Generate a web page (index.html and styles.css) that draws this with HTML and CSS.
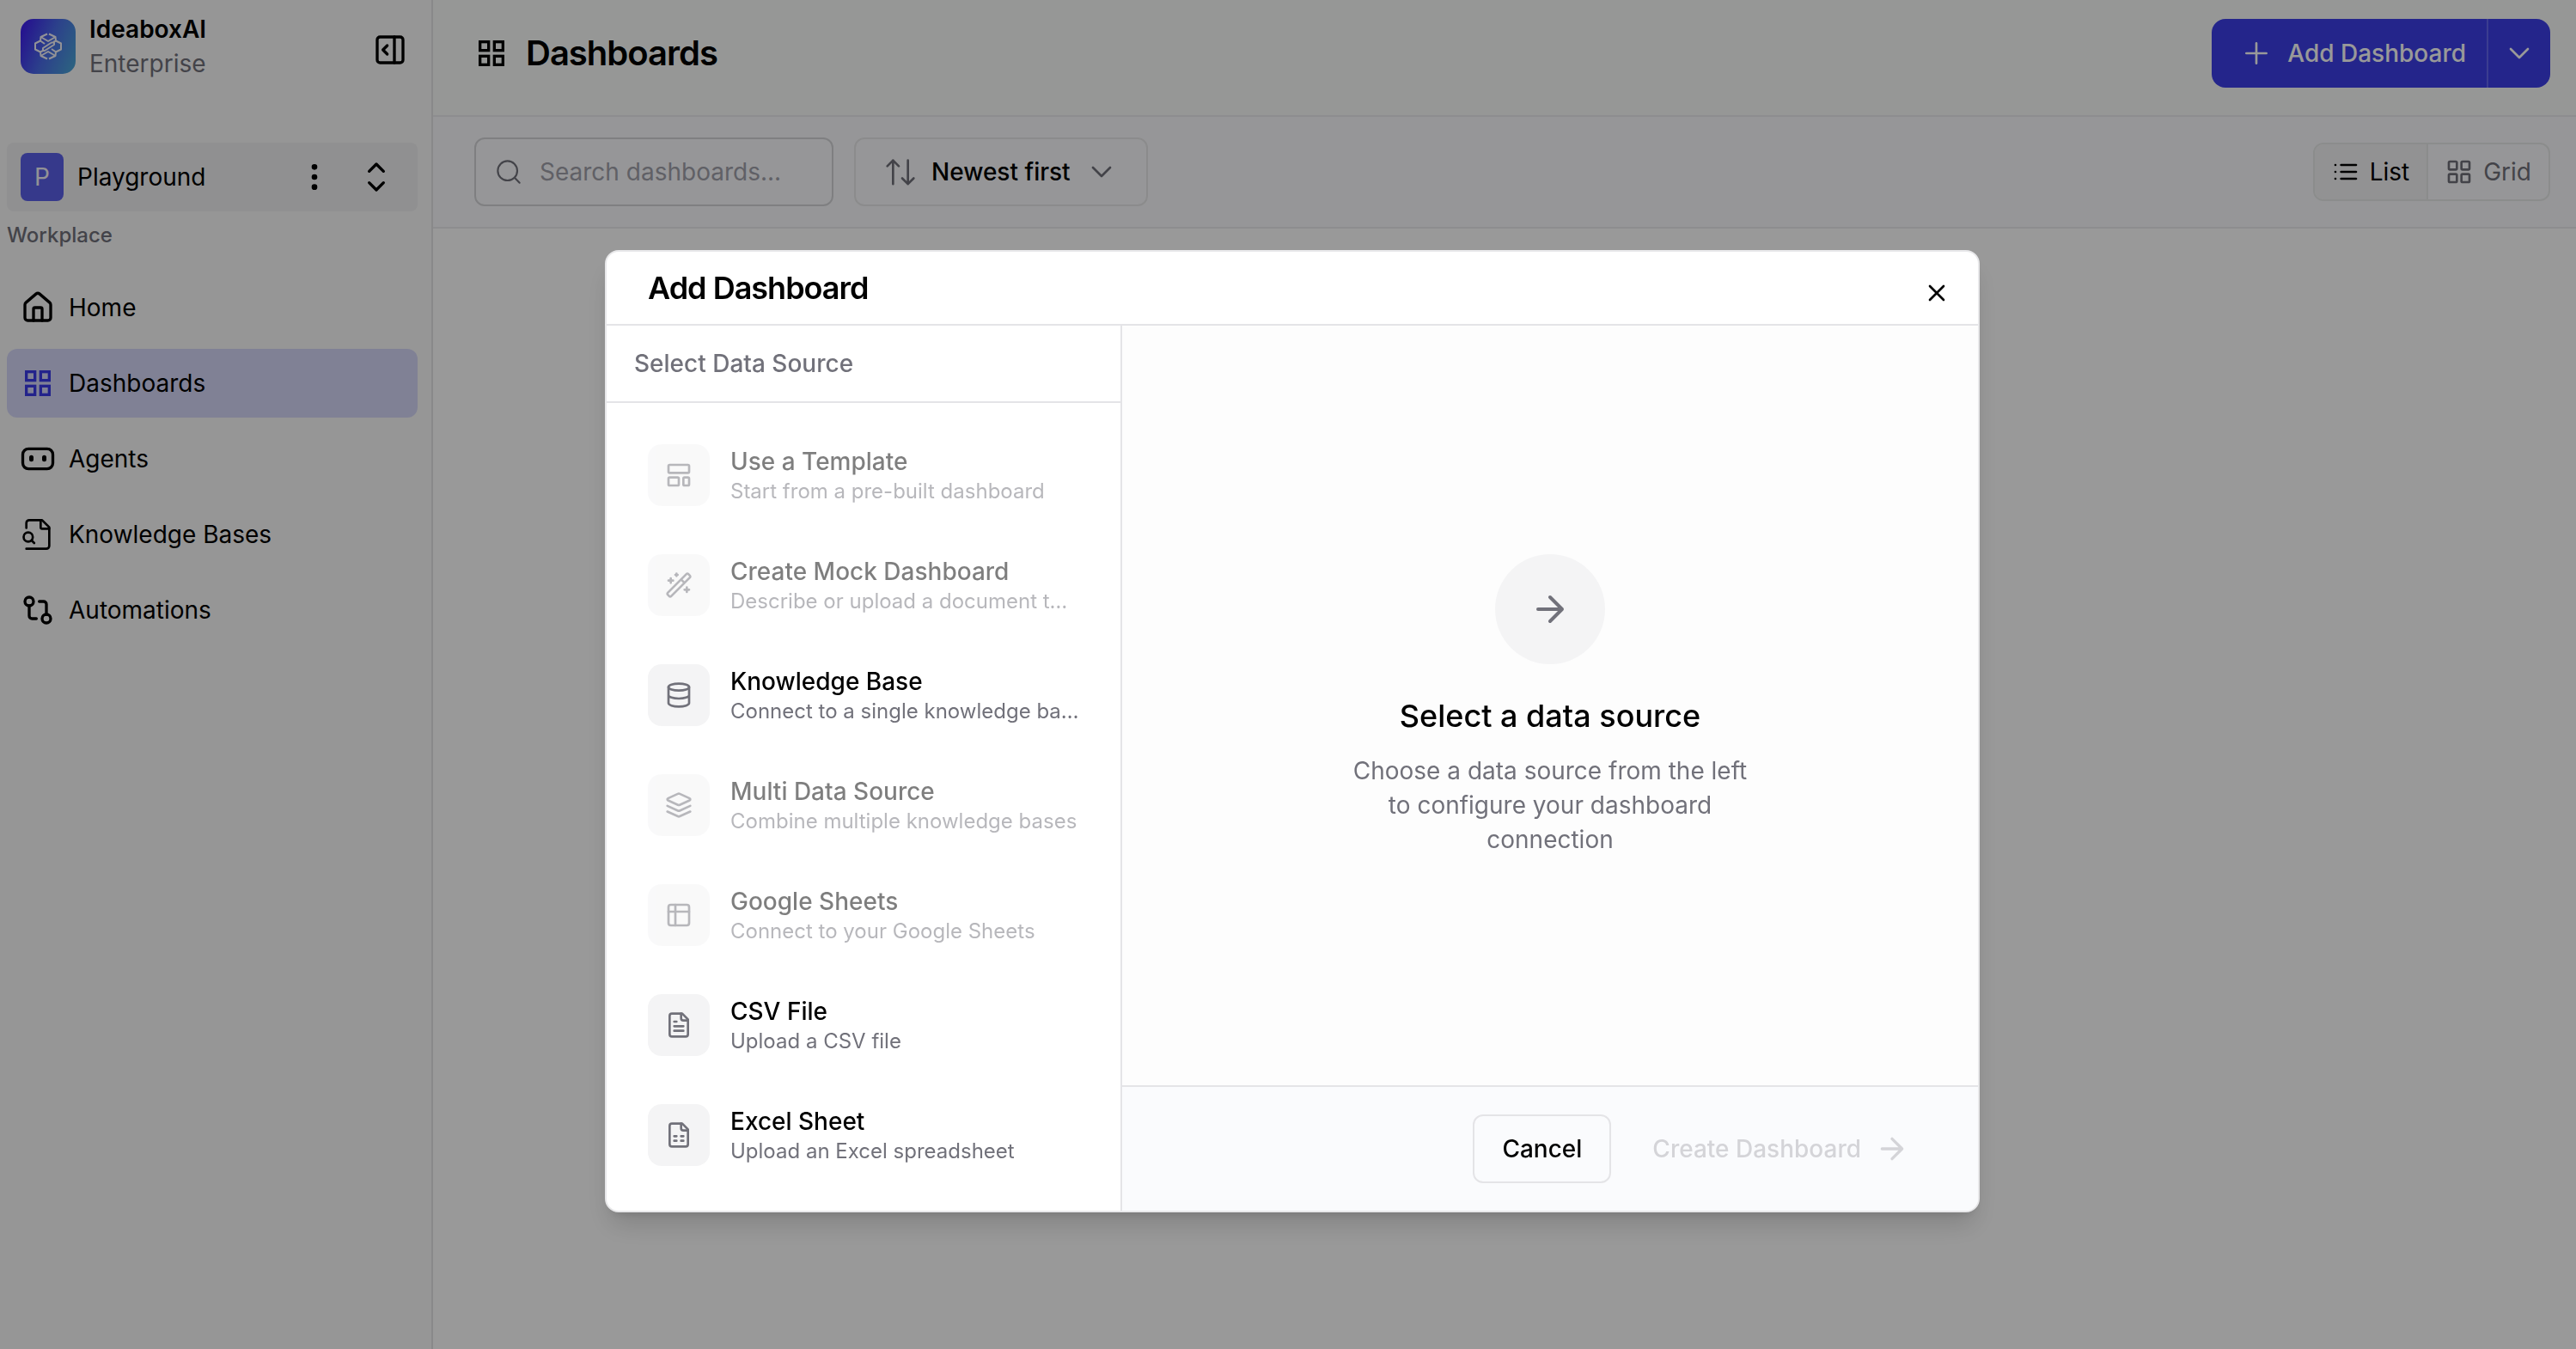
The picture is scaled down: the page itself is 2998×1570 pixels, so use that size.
FILE: index.html
```html
<!DOCTYPE html>
<html lang="en">
<head>
<meta charset="utf-8">
<title>Dashboards</title>
<link rel="stylesheet" href="styles.css">
</head>
<body>
<svg class="sprite" aria-hidden="true">
  <symbol id="i-grid" viewBox="0 0 24 24"><rect x="4" y="4" width="6" height="6"/><rect x="14" y="4" width="6" height="6"/><rect x="4" y="14" width="6" height="6"/><rect x="14" y="14" width="6" height="6"/></symbol>
  <symbol id="i-chevron" viewBox="0 0 24 24"><path d="m6 9 6 6 6-6"/></symbol>
  <symbol id="i-arrow" viewBox="0 0 24 24"><path d="M5 12h14M12 5l7 7-7 7"/></symbol>
</svg>
<div class="app">
  <aside class="sidebar">
    <div class="brand">
      <svg class="logo" viewBox="0 0 64 64" aria-hidden="true">
        <defs><linearGradient id="lg" x1="0" y1="0.3" x2="1" y2="0.7"><stop offset="0" stop-color="#3f22ee"/><stop offset=".5" stop-color="#4a6ce8"/><stop offset="1" stop-color="#4aa0d8"/></linearGradient></defs>
        <rect width="64" height="64" rx="15" fill="url(#lg)"/>
        <g fill="none" stroke="#f4f4fa" stroke-width="2" stroke-linejoin="round">
          <path d="M31 17.500l-7.500 3.500-.5 4.500-6 3v7l6 3 .5 4.500 7.500 3.500M33 17.500l7.500 3.500.5 4.500 6 3v7l-6 3-.5 4.500-7.500 3.500"/>
          <path d="M23.500 21l8.500 5 8.500-5M23.500 43l8.500-5 8.500 5M23 25.500l5 3.500M41 38.500l-5-3.500M41 25.500l-3 1.500M23 38.500l3-1.500"/>
          <path d="M26 37v-3l10-6.500h3v2.500L28 37z"/>
        </g>
      </svg>
      <div class="brand-text"><strong>IdeaboxAI</strong><span>Enterprise</span></div>
      <button class="icon-btn collapse" aria-label="Collapse sidebar"><svg class="icon i40" viewBox="0 0 24 24"><rect x="3" y="3" width="18" height="18" rx="2"/><path d="M15 3v18M10 9l-3 3 3 3"/></svg></button>
    </div>
    <div class="workspace">
      <span class="avatar">P</span>
      <span class="workspace-name">Playground</span>
      <div class="workspace-actions">
        <button class="icon-btn" aria-label="More"><svg class="icon i40 dots" viewBox="0 0 24 24"><circle cx="12" cy="5" r="1"/><circle cx="12" cy="12" r="1"/><circle cx="12" cy="19" r="1"/></svg></button>
        <button class="icon-btn" aria-label="Switch workspace"><svg class="icon i40" viewBox="0 0 24 24"><path d="m7 16 5 5 5-5M7 8l5-5 5 5"/></svg></button>
      </div>
    </div>
    <p class="section-label">Workplace</p>
    <nav class="nav">
      <a href="#"><svg class="icon i40" viewBox="0 0 24 24"><path d="M15 21v-8a1 1 0 0 0-1-1h-4a1 1 0 0 0-1 1v8"/><path d="M3 10a2 2 0 0 1 .709-1.528l7-5.999a2 2 0 0 1 2.582 0l7 5.999A2 2 0 0 1 21 10v9a2 2 0 0 1-2 2H5a2 2 0 0 1-2-2z"/></svg>Home</a>
      <a href="#" class="active"><svg class="icon i40 square"><use href="#i-grid"/></svg>Dashboards</a>
      <a href="#"><svg class="icon i40" viewBox="0 0 24 24"><rect x="1.500" y="5" width="21" height="14" rx="4"/><path d="M7.500 11v1.500M16.500 11v1.500" stroke-width="3"/></svg>Agents</a>
      <a href="#"><svg class="icon i40 thin" viewBox="0 0 24 24"><path d="M14 2v5a1 1 0 0 0 1 1h5"/><path d="M4 7.500V4a2 2 0 0 1 2-2h9l5 5v13a2 2 0 0 1-2 2H4"/><circle cx="5.300" cy="13.800" r="3.200"/><path d="m9.500 18-1.900-1.900"/></svg>Knowledge Bases</a>
      <a href="#"><svg class="icon i40" viewBox="0 0 24 24"><circle cx="18" cy="18" r="3"/><circle cx="6" cy="6" r="3"/><path d="M13 6h3a2 2 0 0 1 2 2v7M11 18H8a2 2 0 0 1-2-2V9"/></svg>Automations</a>
    </nav>
  </aside>
  <main class="main">
    <header class="page-head">
      <svg class="icon i40 square"><use href="#i-grid"/></svg>
      <h1>Dashboards</h1>
      <div class="split">
        <button class="split-main"><svg class="icon i40 light" viewBox="0 0 24 24"><path d="M5 12h14M12 5v14"/></svg>Add Dashboard</button>
        <button class="split-more" aria-label="More options"><svg class="icon i40 light"><use href="#i-chevron"/></svg></button>
      </div>
    </header>
    <div class="toolbar">
      <label class="search"><svg class="icon i32 light" viewBox="0 0 24 24"><circle cx="11" cy="11" r="8.500"/><path d="m17.500 17.500 4 4"/></svg><input type="text" placeholder="Search dashboards..." aria-label="Search dashboards"></label>
      <button class="sort"><svg class="icon i40 light" viewBox="0 0 24 24"><path d="M2.800 8l4-4 4 4M6.800 4v16.500M21.200 16.500l-4 4-4-4M17.200 20.500V4"/></svg>Newest first<svg class="icon i40 light"><use href="#i-chevron"/></svg></button>
      <div class="views">
        <button class="on"><svg class="icon i32" viewBox="0 0 24 24"><path d="M8 6h13M8 12h13M8 18h13M3 6h.01M3 12h.01M3 18h.01"/></svg>List</button>
        <button><svg class="icon i32" viewBox="0 0 24 24"><rect x="3" y="3" width="7" height="7" rx="1"/><rect x="14" y="3" width="7" height="7" rx="1"/><rect x="3" y="14" width="7" height="7" rx="1"/><rect x="14" y="14" width="7" height="7" rx="1"/></svg>Grid</button>
      </div>
    </div>
  </main>
</div>
<div class="overlay">
  <section class="modal" role="dialog" aria-modal="true" aria-labelledby="dlg-title">
    <header class="modal-head">
      <h2 id="dlg-title">Add Dashboard</h2>
      <button class="icon-btn close" aria-label="Close"><svg class="icon i32" viewBox="0 0 24 24"><path d="M18 6 6 18M6 6l12 12"/></svg></button>
    </header>
    <div class="modal-body">
      <div class="sources">
        <h3>Select Data Source</h3>
        <div class="source-list">
          <button class="source" disabled><span class="tile"><svg class="icon i32" viewBox="0 0 24 24"><rect x="3" y="3" width="18" height="7" rx="1"/><rect x="3" y="14" width="9" height="7" rx="1"/><rect x="16" y="14" width="5" height="7" rx="1"/></svg></span><span class="source-text"><b>Use a Template</b><small>Start from a pre-built dashboard</small></span></button>
          <button class="source" disabled><span class="tile"><svg class="icon i32" viewBox="0 0 24 24"><path d="m21.640 3.640-1.280-1.280a1.210 1.210 0 0 0-1.720 0L2.360 18.640a1.210 1.210 0 0 0 0 1.720l1.280 1.280a1.200 1.200 0 0 0 1.720 0L21.640 5.360a1.200 1.200 0 0 0 0-1.720M14 7l3 3M5 6v4M19 14v4M10 2v2M7 8H3M21 16h-4M11 3H9"/></svg></span><span class="source-text"><b>Create Mock Dashboard</b><small>Describe or upload a document to generate one</small></span></button>
          <button class="source"><span class="tile"><svg class="icon i32" viewBox="0 0 24 24"><ellipse cx="12" cy="5" rx="9" ry="3"/><path d="M3 5v14a9 3 0 0 0 18 0V5M3 12a9 3 0 0 0 18 0"/></svg></span><span class="source-text"><b>Knowledge Base</b><small>Connect to a single knowledge base</small></span></button>
          <button class="source" disabled><span class="tile"><svg class="icon i32" viewBox="0 0 24 24"><path d="m12.830 2.180a2 2 0 0 0-1.660 0L2.600 6.080a1 1 0 0 0 0 1.830l8.580 3.910a2 2 0 0 0 1.660 0l8.580-3.900a1 1 0 0 0 0-1.830z"/><path d="m22 17.650-9.170 4.160a2 2 0 0 1-1.660 0L2 17.650M22 12.650l-9.170 4.160a2 2 0 0 1-1.660 0L2 12.650"/></svg></span><span class="source-text"><b>Multi Data Source</b><small>Combine multiple knowledge bases</small></span></button>
          <button class="source" disabled><span class="tile"><svg class="icon i32" viewBox="0 0 24 24"><rect x="3" y="3" width="18" height="18" rx="2"/><path d="M3 9h18M9 3v18"/></svg></span><span class="source-text"><b>Google Sheets</b><small>Connect to your Google Sheets</small></span></button>
          <button class="source"><span class="tile"><svg class="icon i32" viewBox="0 0 24 24"><path d="M15 2H6a2 2 0 0 0-2 2v16a2 2 0 0 0 2 2h12a2 2 0 0 0 2-2V7Z"/><path d="M14 2v4a2 2 0 0 0 2 2h4M10 9H8M16 13H8M16 17H8"/></svg></span><span class="source-text"><b>CSV File</b><small>Upload a CSV file</small></span></button>
          <button class="source"><span class="tile"><svg class="icon i32" viewBox="0 0 24 24"><path d="M15 2H6a2 2 0 0 0-2 2v16a2 2 0 0 0 2 2h12a2 2 0 0 0 2-2V7Z"/><path d="M14 2v4a2 2 0 0 0 2 2h4M8 13h2M14 13h2M8 17h2M14 17h2"/></svg></span><span class="source-text"><b>Excel Sheet</b><small>Upload an Excel spreadsheet</small></span></button>
        </div>
      </div>
      <div class="detail">
        <div class="empty">
          <span class="circle"><svg class="icon i48"><use href="#i-arrow"/></svg></span>
          <h3>Select a data source</h3>
          <p>Choose a data source from the left to configure your dashboard connection</p>
        </div>
        <footer class="modal-foot">
          <button class="cancel">Cancel</button>
          <button class="create" disabled>Create Dashboard<svg class="icon i40"><use href="#i-arrow"/></svg></button>
        </footer>
      </div>
    </div>
  </section>
</div>
</body>
</html>
```
FILE: styles.css
```css
* { box-sizing: border-box; }
body {
  margin: 0;
  font: 400 28px/40px Inter, "Liberation Sans", sans-serif;
  color: #000;
  background: #fff;
}
h1, h2, h3, p { margin: 0; }
button, input { font: inherit; color: inherit; margin: 0; }
button { display: flex; align-items: center; padding: 0; border: 0; background: none; text-align: left; }
a { color: inherit; text-decoration: none; }
.sprite { display: none; }

.icon { flex: none; fill: none; stroke: currentColor; stroke-width: 2; stroke-linecap: round; stroke-linejoin: round; }
.icon.square { stroke-linejoin: miter; }
.icon.light, .icon.thin { stroke-width: 1.6; }
.icon.dots { fill: currentColor; }
.i32 { width: 32px; height: 32px; }
.i40 { width: 40px; height: 40px; }
.i48 { width: 48px; height: 48px; }

.app { display: flex; min-height: 100vh; }
.sidebar { flex: none; width: 504px; padding: 8px 16px 0 8px; background: #fafafa; border-right: 2px solid #e4e4e7; }
.main { flex: 1; min-width: 0; }

.brand { display: flex; align-items: flex-start; padding: 6px 12px 0 16px; }
.logo { flex: none; width: 64px; height: 64px; margin-top: 8px; }
.brand-text { display: flex; flex-direction: column; flex: 1; margin-left: 16px; }
.brand-text strong { font-weight: 600; }
.brand-text span { color: #71717a; }
.collapse { margin-top: 24px; }

.workspace { display: flex; align-items: center; gap: 16px; height: 80px; margin-top: 72px; padding: 0 28px 0 16px; border-radius: 8px; background: #f0f0f2; }
.avatar { width: 50px; height: 56px; border-radius: 8px; background: #5b5fe8; color: #f4f4fa; line-height: 56px; text-align: center; }
.workspace-name { flex: 1; }
.workspace-actions { display: flex; gap: 32px; }

.section-label { margin: 8px 0 0; color: #71717a; font-size: 24px; font-weight: 500; }
.nav { display: flex; flex-direction: column; gap: 8px; margin-top: 24px; }
.nav a { display: flex; align-items: center; gap: 16px; height: 80px; padding: 0 16px; border-radius: 12px; }
.nav .active { background: #d6d8f9; }
.nav .active .icon { color: #3b3be8; }

.page-head { display: flex; align-items: center; gap: 20px; height: 136px; padding: 0 30px 10px 48px; background: #fafcfb; border-bottom: 2px solid #ececee; }
.page-head h1 { flex: 1; font-size: 40px; font-weight: 600; letter-spacing: -1px; }
.split { display: flex; height: 80px; border-radius: 16px; overflow: hidden; background: #3c3fe8; color: #fff; font-weight: 500; }
.split-main { gap: 16px; padding: 0 24px 0 32px; }
.split-more { justify-content: center; width: 74px; border-left: 2px solid #6366f1; }

.toolbar { display: flex; align-items: center; gap: 24px; height: 130px; padding: 0 30px 0 48px; background: #fafbfd; border-bottom: 2px solid #ececee; }
.search { display: flex; align-items: center; gap: 20px; width: 418px; height: 80px; padding: 0 22px; border: 2px solid #d4d4d8; border-radius: 12px; color: #71717a; }
.search input { flex: 1; min-width: 0; padding: 0; border: 0; outline: 0; background: none; }
.search input::placeholder { color: #a1a1aa; opacity: 1; }
.sort { gap: 16px; height: 80px; padding: 0 32px; border: 2px solid #e8e8ea; border-radius: 12px; font-weight: 500; }
.sort .icon { color: #71717a; }
.views { display: flex; height: 68px; margin-left: auto; border: 2px solid #e8eaea; border-radius: 12px; overflow: hidden; color: #71717a; }
.views button { gap: 12px; padding: 0 20px; }
.views .on { background: #f4f4f5; color: #000; border-right: 2px solid #e8eaea; }

.overlay { position: fixed; inset: 0; display: flex; justify-content: center; align-items: flex-start; padding: 291px 0 0 10px; background: rgba(0, 0, 0, .4); }
.modal { width: 1600px; border: 2px solid #e8e8ea; border-radius: 16px; overflow: hidden; background: #fff; box-shadow: 0 20px 30px -6px rgba(0, 0, 0, .15), 0 8px 12px -8px rgba(0, 0, 0, .15); }
.modal-head { display: flex; justify-content: space-between; align-items: center; height: 86px; padding: 0 32px 0 48px; border-bottom: 2px solid #e4e4e7; }
.modal-head h2 { font-size: 36px; font-weight: 600; letter-spacing: -1px; }
.close { align-self: flex-end; padding: 20px 0; }
.modal-body { display: flex; }
.sources { flex: none; width: 600px; border-right: 2px solid #e4e4e7; }
.sources h3 { height: 90px; padding: 24px 32px; border-bottom: 2px solid #e4e4e7; color: #71717a; font-size: 28px; font-weight: 500; }
.source-list { display: flex; flex-direction: column; gap: 8px; padding: 24px 16px 28px; }
.source { gap: 24px; height: 120px; padding: 0 32px; }
.source:disabled { opacity: .5; color: #000; }
.tile { display: flex; flex: none; align-items: center; justify-content: center; width: 72px; height: 72px; border-radius: 16px; background: #f4f4f5; color: #71717a; }
.source-text { display: flex; flex: 1; flex-direction: column; min-width: 0; }
.source-text b { font-weight: 500; line-height: 38px; }
.source-text small { overflow: hidden; color: #71717a; font-size: 24px; line-height: 32px; text-overflow: ellipsis; white-space: nowrap; }

.detail { display: flex; flex: 1; flex-direction: column; }
.empty { display: flex; flex: 1; flex-direction: column; align-items: center; justify-content: center; background: #fdfdfd; text-align: center; }
.circle { display: flex; align-items: center; justify-content: center; width: 128px; height: 128px; border-radius: 50%; background: #f4f4f5; color: #71717a; }
.empty h3 { margin-top: 32px; font-size: 36px; font-weight: 500; line-height: 56px; }
.empty p { width: 480px; margin-top: 16px; color: #71717a; }
.modal-foot { display: flex; align-items: center; justify-content: flex-end; gap: 48px; height: 146px; padding: 0 80px; background: #fafbfd; border-top: 2px solid #e4e4e7; font-weight: 500; }
.cancel { height: 80px; padding: 0 32px; border: 2px solid #e4e4e7; border-radius: 12px; }
.create, .create:disabled { gap: 16px; color: #d4d4d8; }
```
